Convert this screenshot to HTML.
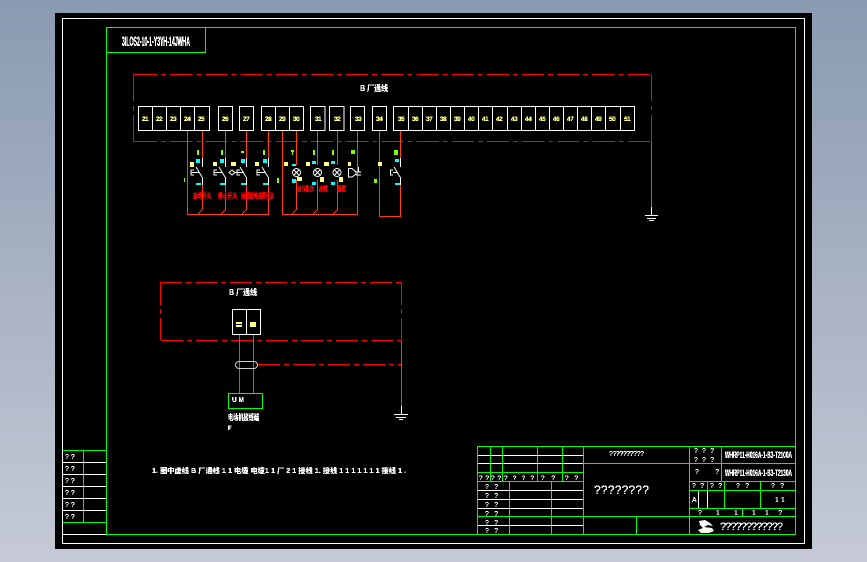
<!DOCTYPE html>
<html><head><meta charset="utf-8"><style>
html,body{margin:0;padding:0;width:867px;height:562px;overflow:hidden;background:linear-gradient(#8a9ab0,#c5cad6)}
svg{position:absolute;left:0;top:0}
text{font-family:"Liberation Sans","Noto Sans CJK SC",sans-serif}
.y text,.y{fill:#ffff80;font-weight:bold;font-size:6.5px;letter-spacing:-.5px}
.q{fill:#fff;font-size:7px;font-family:"Liberation Mono",monospace}
.r{fill:#f00;font-weight:bold;font-size:7px}
.c{fill:#0ff;font-weight:bold;font-size:5px}
.w{fill:#fff;font-weight:bold;font-size:8px}
</style></head><body>
<svg width="867" height="562" viewBox="0 0 867 562" fill="none">
<defs>
<filter id="px" filterUnits="userSpaceOnUse" x="0" y="0" width="867" height="562" color-interpolation-filters="sRGB">
<feComponentTransfer><feFuncA type="discrete" tableValues="0 1 1 1"/></feComponentTransfer>
</filter>
</defs>
<rect x="55" y="13" width="757" height="536" fill="#000"/>
<g shape-rendering="crispEdges">
<rect x="62.5" y="18.5" width="742" height="525" stroke="#fff"/>
<path stroke="#0f0" d="M106.5 27.5H795.5V534.5H106.5ZM106.5 52.5H205.5V27.5M62.5 450.5H106.5M62.5 522.5H106.5M83.5 450.5V522.5"/>
<path stroke="#fff" d="M83.5 462.5H106M83.5 474.5H106M83.5 486.5H106M83.5 498.5H106M83.5 510.5H106M63 462.5H83M63 474.5H83M63 486.5H83M63 498.5H83M63 510.5H83M63 534.5H106"/>
<!-- title block -->
<path stroke="#0f0" d="M477.5 534.5V446.5H795.5M490.5 446.5V481.5M502.5 446.5V481.5M537.5 446.5V481.5M562.5 446.5V481.5M583.5 446.5V534.5M477.5 472.5H583.5M477.5 481.5H583.5M509.5 481.5V534.5M551.5 481.5V534.5M583.5 463.5H795.5M583.5 516.5H795.5M636.5 516.5V534.5M689.5 446.5V534.5M721.5 446.5V481.5M689.5 481.5H795.5M689.5 490.5H795.5M689.5 508.5H795.5M707.5 481.5V490.5M724.5 481.5V508.5M760.5 481.5V508.5M742.5 508.5V516.5"/>
<path stroke="#fff" d="M478 455.5H583M478 463.5H583M478 490.5H583M478 499.5H583M478 508.5H583M478 525.5H583M698.5 491V508M707.5 491V508"/>
<path stroke="#0f0" d="M478 516.5H583"/>
<!-- red dashes -->
<g stroke="#f00">
<path stroke-dasharray="22.2 4 4.8 4.17" d="M135 74.5H651"/>
<path stroke-dasharray="22.2 4 4.8 4.2" d="M135 141.5H651"/>
<path d="M133.5 74V101M133.5 106V111M133.5 115V141M651.5 74V101M651.5 106V110M651.5 115V141M133 74.5H135M133 141.5H135"/>
<path stroke-dasharray="22 4 5 4" d="M160 282.5H401"/>
<path stroke-dasharray="22 4 5 4" d="M161 340.5H401"/>
<path d="M160.5 282V305M160.5 309V314M160.5 318V340M401.5 282V305M401.5 309V314M401.5 318V340"/>
<path stroke-dasharray="22 4 5 4" d="M258 364.5H401"/>
</g>
<!-- orange wires -->
<path stroke="#ff4000" d="M651.5 141V207M187.5 130V214.5H268.5V185M202.5 130V158M202.5 185V210M225.5 130V158M225.5 185V210M246.5 130V158M246.5 185V210M268.5 130V158M282.5 130V214.5H357.5V130M296.5 130V165M296.5 180V210M317.5 130V165M317.5 180V210M337.5 130V165M337.5 180V210M379.5 130V216.5H400.5V185M400.5 130V158M239.5 334V393M253.5 334V393M401.5 341V406"/>
<!-- terminals -->
<path stroke="#fff" d="M138.5 106.5H209.5V130.5H138.5ZM152.5 106V130M166.5 106V130M180.5 106V130M194.5 106V130M218.5 106.5H232.5V130.5H218.5ZM239.5 106.5H253.5V130.5H239.5ZM261.5 106.5H303.5V130.5H261.5ZM275.5 106V130M289.5 106V130M310.5 106.5H325V130.5H310.5ZM329.5 106.5H344V130.5H329.5ZM350.5 106.5H364.5V130.5H350.5ZM372.5 106.5H386.5V130.5H372.5ZM393.5 106.5H634.5V130.5H393.5ZM408.5 106V130M422.5 106V130M436.5 106V130M450.5 106V130M464.5 106V130M478.5 106V130M492.5 106V130M507.5 106V130M521.5 106V130M535.5 106V130M549.5 106V130M563.5 106V130M577.5 106V130M591.5 106V130M605.5 106V130M620.5 106V130"/>
<path stroke="#fff" d="M232.5 309.5H260.5V334.5H232.5ZM246.5 309V334M651.5 207V215M645 215.5H658M647 218.5H656M649 220.5H654M401.5 406V414M394 414.5H408M396 417.5H406M399 419.5H403"/>
<path stroke="#fff" d="M202.5 158V167M202.5 177V185M225.5 158V167M225.5 177V185M246.5 158V167M246.5 177V185M268.5 158V167M268.5 177V185M400.5 158V167M400.5 177V185"/>
<path stroke="#0f0" d="M228.5 393.5H262.5V408.5H228.5Z"/>
<!-- solid marks -->
<g fill="#80ff00"><rect x="197" y="150" width="2" height="5"/><rect x="221" y="150" width="2" height="5"/><rect x="241" y="151" width="3" height="2"/><rect x="263" y="150" width="2" height="5"/><rect x="291" y="150" width="3" height="2"/><rect x="292" y="152" width="1" height="3"/><rect x="313" y="150" width="2" height="5"/><rect x="332" y="150" width="2" height="5"/><rect x="351" y="150" width="4" height="4"/><rect x="184" y="178" width="1" height="4"/><rect x="277" y="178" width="2" height="5"/><rect x="374" y="179" width="3" height="4"/><rect x="394" y="150" width="4" height="5"/></g>
<g fill="#ffff80"><rect x="190" y="162" width="4" height="5"/><rect x="213" y="162" width="4" height="4"/><rect x="231" y="162" width="5" height="4"/><rect x="255" y="162" width="4" height="4"/><rect x="284" y="162" width="4" height="4"/><rect x="306" y="162" width="4" height="4"/><rect x="324" y="162" width="5" height="4"/><rect x="348" y="162" width="3" height="4"/><rect x="378" y="162" width="4" height="4"/><rect x="297" y="177" width="5" height="4"/><rect x="320" y="177" width="4" height="5"/><rect x="339" y="177" width="4" height="5"/><rect x="250" y="322" width="6" height="5"/><rect x="236" y="322" width="6" height="2"/><rect x="236" y="325" width="6" height="2"/></g>
<g fill="#0ff"><rect x="196" y="159" width="4" height="4"/><rect x="220" y="159" width="4" height="4"/><rect x="241" y="159" width="4" height="4"/><rect x="263" y="159" width="4" height="4"/><rect x="292" y="164" width="4" height="2"/><rect x="312" y="161" width="4" height="3"/><rect x="331" y="161" width="4" height="3"/><rect x="395" y="159" width="4" height="3"/><rect x="292" y="179" width="4" height="4"/><rect x="196" y="183" width="5" height="2"/><rect x="220" y="183" width="5" height="2"/><rect x="241" y="183" width="5" height="2"/><rect x="263" y="183" width="5" height="2"/><rect x="312" y="182" width="4" height="3"/><rect x="331" y="182" width="4" height="3"/><rect x="395" y="183" width="5" height="2"/></g>
</g>
<!-- switch arms, contacts -->
<g stroke="#fff" stroke-width="1">
<path d="M196 167L202 177M219 167L225 177M240 167L246 177M262 167L268 177"/>
<path d="M394 167L400 177"/>
<path d="M194 170H191V175H194M191 172.500H199M217 170H214V175H217M214 172.500H222M240 170H237V175H240M237 172.500H243M260 170H257V175H260M257 172.500H265"/>
<path d="M229 172.500L232 170L235 172.500L232 175ZM235 172.500H237"/>
<path d="M393 170H390.500V175H393M393 172.500H397"/>
<circle cx="296.500" cy="172.500" r="4"/><path d="M294 170L299 175M299 170L294 175"/>
<circle cx="317.500" cy="172.500" r="4"/><path d="M315 170L320 175M320 170L315 175"/>
<circle cx="337" cy="172.500" r="4"/><path d="M334.500 170L339.500 175M339.500 170L334.500 175"/>
<path d="M348.500 168.500H352L356 172V174L352 177H348.500ZM356 172H361M356 175H361M358.500 167V172"/>
<rect x="235.500" y="361.500" width="22" height="7" rx="3.500" stroke="#ccc"/>
</g>
<path stroke="#ff4000" d="M202 210L198 214M225 210L221 214M246 210L242 214M296 210L292 214M317 210L313 214M337 210L333 214"/>
<!-- logo -->
<path fill="#fff" d="M699 521L705 520L710 523L713 526L708 525L704 527L712 528L714 531L709 533L701 533L698 530L703 528L700 525Z"/>
<!-- texts -->
<g filter="url(#px)">
<text x="122" y="46" fill="#fff" font-size="14" font-weight="bold" textLength="68" lengthAdjust="spacingAndGlyphs">3ILOS2-10-1-Y3YH-14JWHA</text>
<text x="360" y="91" class="w" textLength="28" lengthAdjust="spacingAndGlyphs">B 厂通线</text>
<text x="229" y="295" class="w" textLength="28" lengthAdjust="spacingAndGlyphs">B 厂通线</text>
<g class="y">
<text x="142" y="121">21</text><text x="156" y="121">22</text><text x="170" y="121">23</text><text x="184" y="121">24</text><text x="198" y="121">25</text><text x="222" y="121">26</text><text x="243" y="121">27</text><text x="265" y="121">28</text><text x="279" y="121">29</text><text x="293" y="121">30</text><text x="315" y="121">31</text><text x="334" y="121">32</text><text x="355" y="121">33</text><text x="376" y="121">34</text><text x="398" y="121">35</text><text x="412" y="121">36</text><text x="426" y="121">37</text><text x="440" y="121">38</text><text x="454" y="121">39</text><text x="468" y="121">40</text><text x="482" y="121">41</text><text x="496" y="121">42</text><text x="511" y="121">43</text><text x="525" y="121">44</text><text x="539" y="121">45</text><text x="553" y="121">46</text><text x="567" y="121">47</text><text x="581" y="121">48</text><text x="595" y="121">49</text><text x="609" y="121">50</text><text x="624" y="121">51</text>
</g>
<text x="193" y="198" class="r" textLength="18" lengthAdjust="spacingAndGlyphs">启动开关</text>
<text x="218" y="198" class="r" textLength="19" lengthAdjust="spacingAndGlyphs">停止开关</text>
<text x="241" y="198" class="r" textLength="33" lengthAdjust="spacingAndGlyphs">远程就地选择开关</text>
<text x="297" y="191" class="r" textLength="17" lengthAdjust="spacingAndGlyphs">运行指示</text>
<text x="319" y="191" class="r" textLength="9" lengthAdjust="spacingAndGlyphs">故障</text>
<text x="337" y="191" class="r" textLength="9" lengthAdjust="spacingAndGlyphs">报警</text>
<text x="232" y="402" fill="#fff" font-size="7" font-weight="bold" textLength="12" lengthAdjust="spacingAndGlyphs">U M</text>
<text x="228" y="420" class="w" textLength="31" lengthAdjust="spacingAndGlyphs">电动机接线端</text>
<text x="228" y="430" fill="#fff" font-size="6" font-weight="bold">F</text>
<text x="152" y="473" fill="#fff" font-size="7" font-weight="bold" textLength="254" lengthAdjust="spacingAndGlyphs">1. 图中虚线 B 厂通线 1 1 电缆 电缆1 1 厂 2 1 接线 1. 接线 1 1 1 1 1 1 1 接线 1 .</text>
<g class="q">
<text x="65" y="459">? ?</text><text x="65" y="471">? ?</text><text x="65" y="483">? ?</text><text x="65" y="495">? ?</text><text x="65" y="507">? ?</text><text x="65" y="519">? ?</text>
<text x="479" y="480" font-size="6.500" textLength="10">? ?</text><text x="491" y="480" font-size="6.500" textLength="10">? ?</text><text x="504" y="480" textLength="30" font-size="6.500">? ? ? ?</text><text x="541" y="480" textLength="14" font-size="6.500">? ?</text><text x="565" y="480" textLength="13" font-size="6.500">? ?</text>
<text x="485" y="489" textLength="13">? ?</text><text x="485" y="498" textLength="13">? ?</text><text x="485" y="507" textLength="13">? ?</text><text x="485" y="516" textLength="13">? ?</text><text x="485" y="525" textLength="13">? ?</text><text x="485" y="533" textLength="13">? ?</text>
<text x="609" y="456" textLength="35">??????????</text>
<text x="594" y="494" font-size="12" textLength="55" lengthAdjust="spacing">????????</text>
<text x="694" y="453" textLength="20">? ? ?</text><text x="694" y="462" textLength="20">? ? ?</text>
<text x="695" y="474" textLength="24">?    ?</text>
<text x="692" y="488" textLength="12">? ?</text><text x="710" y="488" textLength="12">? ?</text><text x="736" y="488" textLength="13">? ?</text><text x="771" y="488" textLength="13">? ?</text>
<text x="692" y="502" font-size="7">A</text><text x="775" y="502" font-size="7">1 1</text>
<text x="698" y="515" textLength="40">?  1  1</text><text x="752" y="515" textLength="30">1  1 ?</text>
<text x="720" y="530" font-size="11" textLength="63" lengthAdjust="spacing">????????????</text>
</g>
<text x="725" y="458" fill="#fff" font-size="9" font-weight="bold" textLength="67" lengthAdjust="spacingAndGlyphs">WHRP11-H016A-1-B3-T2100A</text>
<text x="725" y="476" fill="#fff" font-size="9" font-weight="bold" textLength="67" lengthAdjust="spacingAndGlyphs">WHRP11-H016A-1-B3-T2130A</text>
</g>
</svg>
</body></html>
